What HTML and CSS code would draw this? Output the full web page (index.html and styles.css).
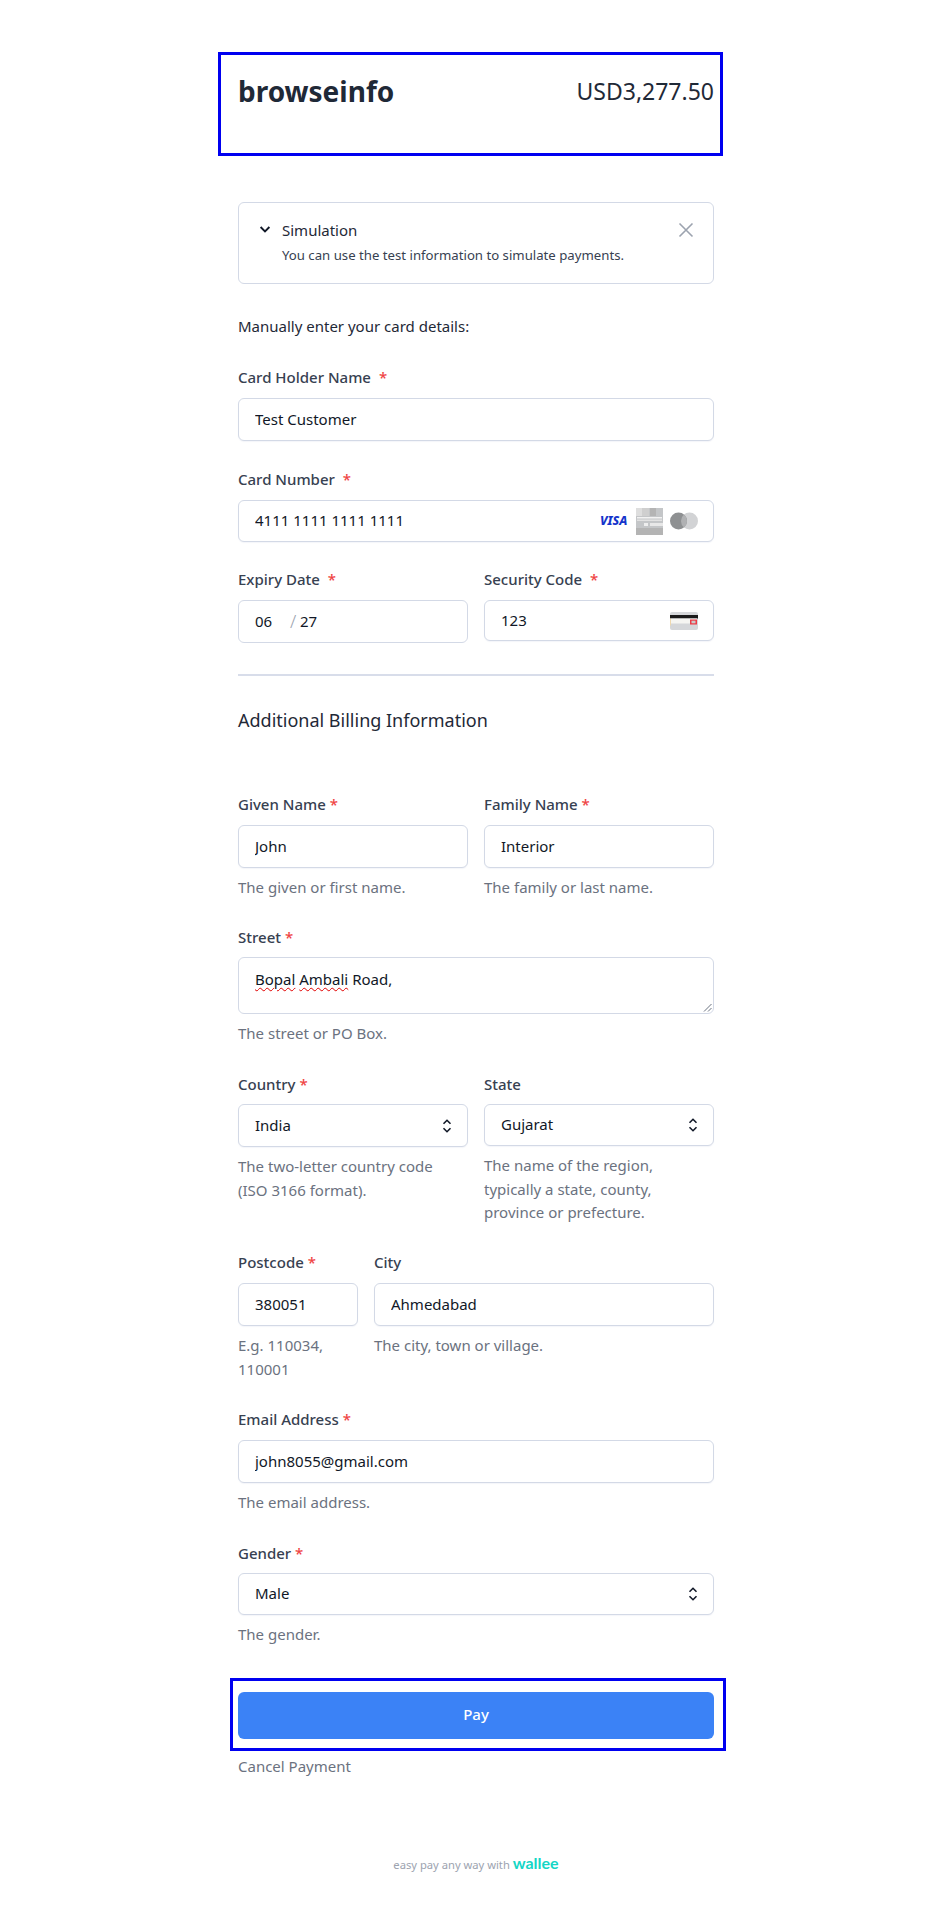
FILE: index.html
```html
<!DOCTYPE html>
<html lang="en">
<head>
<meta charset="utf-8">
<title>browseinfo</title>
<link rel="stylesheet" href="styles.css">
</head>
<body>
<main class="page">
  <header class="merchant">
    <h1 class="merchant-name">browseinfo</h1>
    <div class="merchant-total">USD3,277.50</div>
  </header>

  <form class="form">
    <section class="notice">
      <svg class="notice-chevron" viewBox="0 0 12 12" width="12" height="12" aria-hidden="true"><path d="M1.6 4 6 8.4 10.400 4" fill="none" stroke="#111827" stroke-width="1.9"/></svg>
      <div class="notice-body">
        <div class="notice-title">Simulation</div>
        <div class="notice-text">You can use the test information to simulate payments.</div>
      </div>
      <svg class="notice-close" viewBox="0 0 16 16" width="16" height="16" aria-hidden="true"><path d="M1.500 1.500l13 13M14.500 1.500l-13 13" fill="none" stroke="#9ca3af" stroke-width="1.6"/></svg>
    </section>

    <p class="intro">Manually enter your card details:</p>

    <div class="field card-name">
      <label class="label">Card Holder Name <span class="req wide">*</span></label>
      <input class="input h43" value="Test Customer">
    </div>

    <div class="field card-number">
      <label class="label">Card Number <span class="req wide">*</span></label>
      <div class="with-icons">
        <input class="input h42" value="4111 1111 1111 1111">
        <div class="brands">
          <span class="visa">VISA</span>
          <svg width="27" height="27" viewBox="0 0 27 27" aria-hidden="true">
            <rect width="27" height="27" fill="#c4c6c8"/>
            <rect x="0" y="0" width="6" height="8" fill="#dedede"/>
            <rect x="6" y="0" width="7" height="8" fill="#cfcfcf"/>
            <rect x="14" y="0" width="6" height="8" fill="#b4b4b4"/>
            <rect x="1" y="9" width="25" height="1.500" fill="#f2f2f2"/>
            <rect x="1" y="11.500" width="25" height="1.500" fill="#e2e2e2"/>
            <rect x="8" y="15" width="4" height="3" fill="#eeeeee"/>
            <rect x="14" y="15" width="13" height="3" fill="#e8e8e8"/>
            <rect x="0" y="20" width="27" height="7" fill="#b4b4b4"/>
          </svg>
          <svg width="28" height="18" viewBox="0 0 28 18" aria-hidden="true">
            <circle cx="19.500" cy="9" r="8.500" fill="#d2d3d5"/>
            <circle cx="8.500" cy="9" r="8.500" fill="#8e9092"/>
            <path d="M14 2.500a8.500 8.500 0 0 1 0 13a8.500 8.500 0 0 1 0-13z" fill="#b0b1b3"/>
          </svg>
        </div>
      </div>
    </div>

    <div class="grid-2 card-extra">
      <div class="field">
        <label class="label">Expiry Date <span class="req wide">*</span></label>
        <div class="expiry">
          <input class="expiry-part month" value="06">
          <span class="expiry-sep">/</span>
          <input class="expiry-part" value="27">
        </div>
      </div>
      <div class="field">
        <label class="label">Security Code <span class="req wide">*</span></label>
        <div class="with-icons">
          <input class="input h41" value="123">
          <div class="brands">
            <svg width="28" height="18" viewBox="0 0 28 18" aria-hidden="true">
              <rect width="28" height="18" rx="2" fill="#d5d7da"/>
              <rect y="3" width="28" height="3.500" fill="#1a1a1a"/>
              <rect x="1" y="6.500" width="26" height="5" fill="#f5f5f2"/>
              <rect y="6.500" width="1" height="7" fill="#eed9b0"/>
              <rect x="20" y="7.500" width="7" height="5" fill="#ee3b46"/>
              <rect x="21.500" y="8.700" width="4" height="2.600" fill="#c9c9c9"/>
            </svg>
          </div>
        </div>
      </div>
    </div>

    <hr class="divider">

    <h2 class="section-title">Additional Billing Information</h2>

    <div class="grid-2 billing-first">
      <div class="field">
        <label class="label">Given Name <span class="req">*</span></label>
        <input class="input h43" value="John">
        <p class="hint">The given or first name.</p>
      </div>
      <div class="field">
        <label class="label">Family Name <span class="req">*</span></label>
        <input class="input h43" value="Interior">
        <p class="hint">The family or last name.</p>
      </div>
    </div>

    <div class="field row-s">
      <label class="label tight">Street <span class="req">*</span></label>
      <div class="textarea">
        <span class="misspelt">Bopal</span> <span class="misspelt">Ambali</span> Road,
        <svg class="grip" width="9" height="9" viewBox="0 0 9 9" aria-hidden="true"><path d="M1 8.500 8.500 1M5 8.500 8.500 5" stroke="#6b7280" stroke-width="1" fill="none"/></svg>
      </div>
      <p class="hint">The street or PO Box.</p>
    </div>

    <div class="grid-2 row-l">
      <div class="field">
        <label class="label tight">Country <span class="req">*</span></label>
        <div class="select-wrap">
          <select class="input h43 select"><option>India</option></select>
          <svg class="updown" width="10" height="16" viewBox="0 0 10 16" aria-hidden="true"><path d="M1.500 5.800 5 2.300l3.500 3.500M1.500 10.200 5 13.700l3.500-3.500" fill="none" stroke="#111827" stroke-width="1.6"/></svg>
        </div>
        <p class="hint">The two-letter country code<br>(ISO 3166 format).</p>
      </div>
      <div class="field">
        <label class="label tight">State</label>
        <div class="select-wrap">
          <select class="input h42 select"><option>Gujarat</option></select>
          <svg class="updown" width="10" height="16" viewBox="0 0 10 16" aria-hidden="true"><path d="M1.500 5.800 5 2.300l3.500 3.500M1.500 10.200 5 13.700l3.500-3.500" fill="none" stroke="#111827" stroke-width="1.6"/></svg>
        </div>
        <p class="hint">The name of the region, typically a state, county, province or prefecture.</p>
      </div>
    </div>

    <div class="grid-post row-s">
      <div class="field">
        <label class="label">Postcode <span class="req">*</span></label>
        <input class="input h43" value="380051">
        <p class="hint">E.g. 110034, 110001</p>
      </div>
      <div class="field">
        <label class="label">City</label>
        <input class="input h43" value="Ahmedabad">
        <p class="hint">The city, town or village.</p>
      </div>
    </div>

    <div class="field row">
      <label class="label">Email Address <span class="req">*</span></label>
      <input class="input h43" value="john8055@gmail.com">
      <p class="hint">The email address.</p>
    </div>

    <div class="field row-l">
      <label class="label tight">Gender <span class="req">*</span></label>
      <div class="select-wrap">
        <select class="input h42 select"><option>Male</option></select>
        <svg class="updown" width="10" height="16" viewBox="0 0 10 16" aria-hidden="true"><path d="M1.500 5.800 5 2.300l3.500 3.500M1.500 10.200 5 13.700l3.500-3.500" fill="none" stroke="#111827" stroke-width="1.6"/></svg>
      </div>
      <p class="hint">The gender.</p>
    </div>

    <div class="pay-box">
      <button class="pay" type="button">Pay</button>
    </div>
    <a class="cancel">Cancel Payment</a>
  </form>

  <footer class="footer">
    <span>easy pay any way with</span>
    <span class="wallee">wallee</span>
  </footer>
</main>
</body>
</html>
```

FILE: styles.css
```css
* { box-sizing: border-box; }
html, body { margin: 0; padding: 0; background: #fff; }
body {
  font-family: "Noto Sans", "Open Sans", sans-serif;
  font-size: 15px;
  line-height: 20px;
  color: #111827;
}
.page { width: 505px; padding-top: 52px; margin-left: 218px; }

.merchant {
  height: 104px;
  border: 3px solid #0000f0;
  padding: 18px 6px 0 17px;
  display: flex;
  justify-content: space-between;
  align-items: flex-start;
}
.merchant-name { margin: 0; font-size: 28px; line-height: 36px; font-weight: 700; color: #1f2937; }
.merchant-total { font-size: 23px; line-height: 36px; color: #1f2937; }

.form { padding: 46px 9px 0 20px; }

.notice {
  display: flex;
  align-items: flex-start;
  height: 82px;
  border: 1px solid #d3d9e6;
  border-radius: 6px;
  padding: 15px 19px 0 20px;
}
.notice-chevron { margin: 5px 11px 0 0; flex: none; }
.notice-body { flex: 1; }
.notice-title { font-size: 15px; line-height: 24px; color: #1f2937; }
.notice-text { font-size: 13.2px; line-height: 26px; color: #374151; }
.notice-close { margin-top: 4px; flex: none; }

.intro { margin: 32px 0 0; line-height: 20px; color: #1f2937; }

.field { min-width: 0; }
.label { display: block; font-weight: 500; color: #374151; line-height: 18px; margin-bottom: 12px; }
.label.tight { margin-bottom: 11px; }
.req { color: #ef4444; }
.req.wide { margin-left: 4px; }

.card-name { margin-top: 32px; }
.card-number { margin-top: 29px; }
.card-extra { margin-top: 28px; }

.input {
  display: block;
  width: 100%;
  border: 1px solid #d3d9e6;
  border-radius: 6px;
  background: #fff;
  padding: 0 16px 2px;
  font: inherit;
  color: #111827;
  outline: none;
  box-shadow: 0 1px 1px rgba(211, 217, 230, .25);
}
.h41 { height: 41px; }
.h42 { height: 42px; }
.h43 { height: 43px; }
select.select { appearance: none; -webkit-appearance: none; }

.with-icons, .select-wrap { position: relative; }
.brands {
  position: absolute;
  top: 0;
  bottom: 0;
  right: 16px;
  display: flex;
  align-items: center;
  gap: 7px;
}
.visa { font: italic 800 12.5px/14px "Noto Sans", sans-serif; color: #1434cb; width: 29px; white-space: nowrap; }

.expiry {
  display: flex;
  align-items: center;
  height: 43px;
  border: 1px solid #d3d9e6;
  border-radius: 6px;
  padding: 0 16px 2px;
}
.expiry-part {
  width: 22px;
  border: 0;
  padding: 0;
  outline: none;
  font: inherit;
  color: #111827;
  background: transparent;
}
.expiry-part.month { width: 20px; }
.expiry-sep { width: 25px; padding-left: 15px; font-size: 18px; font-weight: 300; color: #9ca3af; }

.grid-2 { display: grid; grid-template-columns: 230px 230px; column-gap: 16px; }
.grid-post { display: grid; grid-template-columns: 120px 340px; column-gap: 16px; }

.divider { border: 0; border-top: 2px solid #d8ddea; margin: 31px 0 0; }
.section-title { margin: 32px 0 0; font-size: 18px; line-height: 24px; font-weight: 400; color: #1f2937; }

.billing-first { margin-top: 63px; }
.row { margin-top: 29px; }
.row-s { margin-top: 28.5px; }
.row-l { margin-top: 29.5px; }

.hint { margin: 8px 0 0; color: #6b7280; line-height: 23.5px; }

.textarea {
  position: relative;
  height: 57px;
  border: 1px solid #d3d9e6;
  border-radius: 6px;
  padding: 11px 16px;
  color: #111827;
}
.misspelt { text-decoration: underline wavy #e00000 1px; text-underline-offset: 2px; }
.grip { position: absolute; right: 1px; bottom: 1px; }

.updown { position: absolute; top: 50%; right: 16px; margin-top: -8px; pointer-events: none; }

.pay-box {
  margin: 31.5px 0 0 -8px;
  width: 496px;
  height: 73px;
  border: 3px solid #0000f0;
  padding: 11px 9px 0 5px;
}
.pay {
  display: block;
  width: 100%;
  height: 47px;
  border: 0;
  border-radius: 6px;
  padding: 0 0 3px;
  background: #3b82f6;
  color: #fff;
  font: 500 15px/20px "Noto Sans", sans-serif;
}
.cancel { display: block; margin-top: 5px; color: #6b7280; line-height: 20px; }

.footer {
  margin-top: 77px;
  text-align: center;
  font-size: 11.2px;
  line-height: 20px;
  color: #9ca3af;
  padding-right: 9px;
  padding-left: 20px;
}
.wallee { font: 700 16px/20px "Lato", sans-serif; color: #14d6c6; }
```
